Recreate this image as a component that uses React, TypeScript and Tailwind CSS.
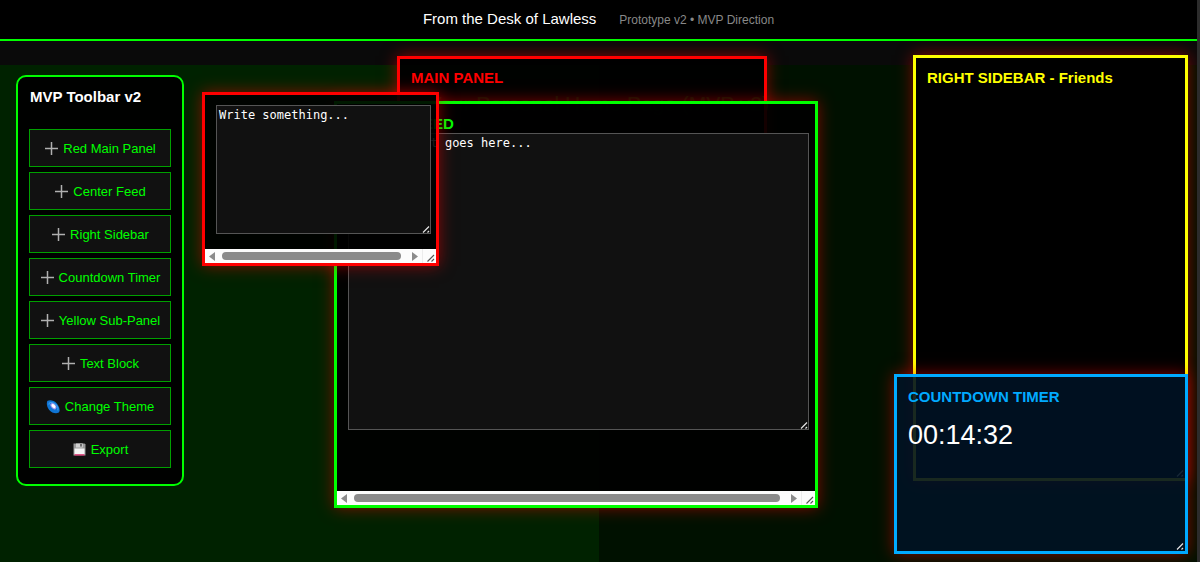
import type { ReactNode } from "react";

type IconName = "plus" | "galaxy" | "disk";

const actions: { icon: IconName; label: string }[] = [
  { icon: "plus", label: "Red Main Panel" },
  { icon: "plus", label: "Center Feed" },
  { icon: "plus", label: "Right Sidebar" },
  { icon: "plus", label: "Countdown Timer" },
  { icon: "plus", label: "Yellow Sub-Panel" },
  { icon: "plus", label: "Text Block" },
  { icon: "galaxy", label: "Change Theme" },
  { icon: "disk", label: "Export" },
];

function Icon({ name }: { name: IconName }) {
  if (name === "plus") {
    return (
      <svg className="size-3.5 shrink-0" viewBox="0 0 14 14" aria-hidden="true">
        <path d="M7.5 0V13M1 6.5H14" stroke="#b0b0b0" strokeWidth="1.5" />
      </svg>
    );
  }
  if (name === "galaxy") {
    return (
      <svg className="size-3.5 shrink-0" viewBox="0 0 14 14" aria-hidden="true">
        <path d="M1.6 0.8C3.8 -0.2 8.2 0.2 11 3.8C13.6 7.2 14.4 11 12.8 12.6C10 14.2 5.8 13.2 3 9.8C0.8 6.8 0.2 2.4 1.6 0.8Z" fill="#0f74d4" />
        <path d="M2.8 4.6C3 2.4 5.6 1.8 8.2 3.4C11 5.1 12.4 8 11.8 10.4" fill="none" stroke="#3f9cf0" strokeWidth="1.1" />
        <ellipse cx="7.4" cy="6.2" rx="3.6" ry="2.3" transform="rotate(48 7.4 6.2)" fill="#a99af0" />
        <ellipse cx="7.5" cy="6.1" rx="2.4" ry="1.5" transform="rotate(48 7.5 6.1)" fill="#ffffff" />
      </svg>
    );
  }
  return (
    <svg className="size-3.5 shrink-0" viewBox="0 0 14 14" aria-hidden="true">
      <path d="M1.5 0.5H12.5L13.5 1.5V12.5H1.5Z" fill="#9a9a9a" />
      <rect x="4" y="0.5" width="6.8" height="4" fill="#d0d0d0" />
      <rect x="8.2" y="1" width="1.6" height="2.6" fill="#555555" />
      <rect x="2.5" y="5.5" width="10" height="6" fill="#f4f4f4" />
      <rect x="2.5" y="11.3" width="10" height="1.2" fill="#e8246c" />
    </svg>
  );
}

function Grip({ light }: { light?: boolean }) {
  return (
    <svg className="pointer-events-none absolute right-px bottom-px size-2" viewBox="0 0 8 8" aria-hidden="true">
      {light ? (
        <path d="M0.5 7.5L7 1M4.5 7.5L7 5" stroke="#555555" strokeWidth="1.1" />
      ) : (
        <path d="M1 7.5L7 1.5M5.5 7.5L7 6" stroke="#e4e4e4" strokeWidth="1.2" />
      )}
    </svg>
  );
}

function ScrollBar() {
  return (
    <div className="relative flex h-3.5 shrink-0 items-center gap-2.5 bg-[#fcfcfc] pr-[18px] pl-1" aria-hidden="true">
      <svg className="-mr-[3px] h-[9px] w-1.5 shrink-0" viewBox="0 0 6 9">
        <path d="M6 0V9L0 4.5Z" fill="#8b8b8b" />
      </svg>
      <div className="mr-px h-2 grow rounded-full bg-[#8b8b8b]" />
      <svg className="h-[9px] w-1.5 shrink-0" viewBox="0 0 6 9">
        <path d="M0 0V9L6 4.5Z" fill="#8b8b8b" />
      </svg>
      <div className="absolute inset-y-0 right-0 w-3.5 border-l border-[#ececec]" />
      <Grip light />
    </div>
  );
}

function Note({ label, text, className }: { label: string; text: string; className: string }) {
  return (
    <div className={`relative ${className}`}>
      <textarea
        aria-label={label}
        defaultValue={text}
        className="block size-full resize-none border border-[#555] bg-[#111] px-0.5 pt-px font-['DejaVu_Sans_Mono',monospace] text-xs text-white outline-none"
      />
      <Grip />
    </div>
  );
}

function Win({ className, children }: { className: string; children: ReactNode }) {
  return (
    <section className={`absolute flex flex-col border-3 shadow-[0_0_15px_rgba(255,0,0,0.5)] ${className}`}>
      {children}
    </section>
  );
}

export default function App() {
  return (
    <div className="flex min-h-screen bg-[#0a0a0a] font-['Liberation_Sans',Arial,sans-serif] text-white">
      <div className="relative flex grow flex-col overflow-hidden">
        <header className="flex h-[41px] items-baseline justify-center gap-[23px] border-b-2 border-[#0f0] bg-black pt-2">
          <span className="text-[15px]">From the Desk of Lawless</span>
          <span className="text-xs text-[#888]">Prototype v2 • MVP Direction</span>
        </header>

        <main className="mt-6 grid grow grid-cols-2">
          <div className="bg-[#020]" />
          <div className="bg-[#010]" />
        </main>
        <h1 className="absolute inset-x-0 top-[92px] text-center text-[21px] leading-6 text-[#0f0]">
          Your Personal Home Page (MVP v2)
        </h1>

        <aside className="absolute top-[75px] left-4 flex w-[168px] flex-col rounded-[10px] border-2 border-[#0f0] bg-black/95 px-[11px] pt-2.5 pb-4">
          <h2 className="mb-[22px] pl-px text-[15px] leading-5 font-bold">MVP Toolbar v2</h2>
          <div className="flex flex-col gap-[5px]">
            {actions.map(({ icon, label }) => (
              <button
                key={label}
                type="button"
                className="flex h-[38px] items-center justify-center gap-[5px] border border-[#00a000] bg-[#111] pt-0.5 text-[13px] whitespace-nowrap text-[#0f0]"
              >
                <Icon name={icon} />
                {label}
              </button>
            ))}
          </div>
        </aside>

        <Win className="top-14 left-[397px] h-[300px] w-[370px] border-[red] bg-black/92 px-[11px] pt-[9px]">
          <h2 className="text-[15px] leading-5 font-bold text-[red]">MAIN PANEL</h2>
        </Win>

        <Win className="top-[55px] right-[9px] h-[426px] w-[275px] border-[yellow] bg-black/95 px-[11px] pt-2.5">
          <h2 className="text-[15px] leading-5 font-bold text-[yellow]">RIGHT SIDEBAR - Friends</h2>
          <Grip />
        </Win>

        <Win className="top-[101px] left-[334px] h-[407px] w-[484px] border-[#0f0] bg-black/92">
          <div className="grow px-[11px] pt-2.5">
            <h2 className="text-[15px] leading-[19px] font-bold text-[#0f0]">CENTER FEED</h2>
            <Note label="Center feed" text="Your content goes here..." className="h-[297px] w-[461px]" />
          </div>
          <ScrollBar />
        </Win>

        <Win className="top-[92px] left-[202px] h-[174px] w-[237px] border-[red] bg-black/90">
          <div className="grow px-[11px] pt-2.5">
            <Note label="Text block" text="Write something..." className="h-[129px] w-[215px]" />
          </div>
          <ScrollBar />
        </Win>

        <Win className="top-[374px] right-[9px] h-[180px] w-[294px] border-[#0af] bg-[#001224]/90 px-[11px] pt-2.5">
          <h2 className="text-[15px] leading-5 font-bold text-[#0af]">COUNTDOWN TIMER</h2>
          <p className="mt-2.5 text-[27px] leading-9">00:14:32</p>
          <Grip />
        </Win>
      </div>
      <div className="w-[3px] shrink-0 bg-[#2c2c2c]" />
    </div>
  );
}
